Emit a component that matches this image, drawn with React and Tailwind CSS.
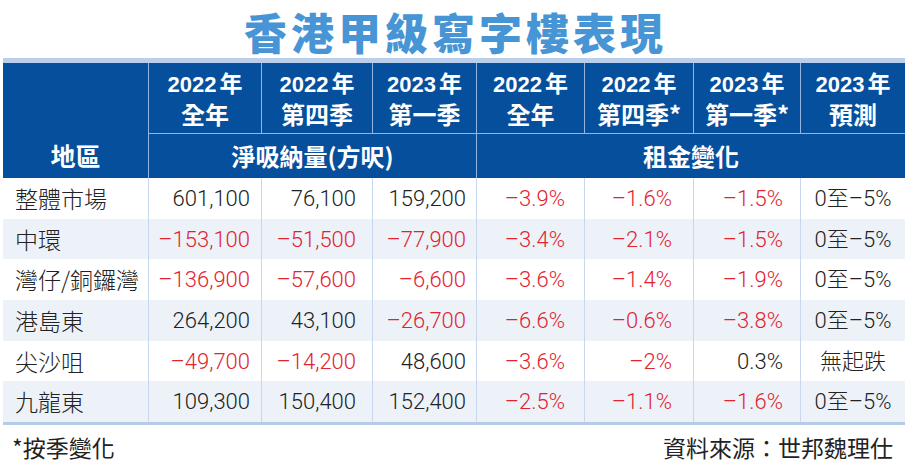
import React from "react";

const headers = [
  ["2022", "全年"],
  ["2022", "第四季"],
  ["2023", "第一季"],
  ["2022", "全年"],
  ["2022", "第四季*"],
  ["2023", "第一季*"],
  ["2023", "預測"],
];

const rows = [
  ["整體市場", [["601,100", 0], ["76,100", 0], ["159,200", 0], ["–3.9%", 1], ["–1.6%", 1], ["–1.5%", 1]], "0至–5%"],
  ["中環", [["–153,100", 1], ["–51,500", 1], ["–77,900", 1], ["–3.4%", 1], ["–2.1%", 1], ["–1.5%", 1]], "0至–5%"],
  ["灣仔/銅鑼灣", [["–136,900", 1], ["–57,600", 1], ["–6,600", 1], ["–3.6%", 1], ["–1.4%", 1], ["–1.9%", 1]], "0至–5%"],
  ["港島東", [["264,200", 0], ["43,100", 0], ["–26,700", 1], ["–6.6%", 1], ["–0.6%", 1], ["–3.8%", 1]], "0至–5%"],
  ["尖沙咀", [["–49,700", 1], ["–14,200", 1], ["48,600", 0], ["–3.6%", 1], ["–2%", 1], ["0.3%", 0]], "無起跌"],
  ["九龍東", [["109,300", 0], ["150,400", 0], ["152,400", 0], ["–2.5%", 1], ["–1.1%", 1], ["–1.6%", 1]], "0至–5%"],
];

const padR = ["pr-[11px]", "pr-[16px]", "pr-[10px]", "pr-[19px]", "pr-[21px]", "pr-[17px]"];
const rowH = ["h-[41px]", "h-[40px]", "h-[41px]", "h-[41px]", "h-[40px]", "h-[41px]"];
const cols = "grid grid-cols-[145px_113px_111px_104px_108px_109px_107px_105px]";
const cjk = "font-['Noto_Sans_CJK_TC','Noto_Sans_CJK_SC',sans-serif]";
const num = "font-['Roboto','Noto_Sans_CJK_TC',sans-serif]";
const head = "font-['Liberation_Sans','Noto_Sans_CJK_TC',sans-serif]";

export default function App() {
  return (
    <div className={`w-[907px] h-[467px] bg-white overflow-hidden ${cjk}`}>
      <div className="h-[63px] -mb-[5px] flex items-start justify-center text-[43px] font-black text-[#4895d5] tracking-[4px] leading-[63px] pl-[4px]">
        香港甲級寫字樓表現
      </div>
      <div className="ml-[3px] w-[902px]">
        <div className="h-[5px] bg-[#b9cfeb]" />
        <div className={`${cols} grid-rows-[70px_45px] bg-[#064f9c] text-white font-bold ${head}`}>
          <div className={`row-span-2 flex items-center justify-center pt-[70px] text-[25px] ${cjk}`}>
            地區
          </div>
          {headers.map(([y, s], i) => (
            <div
              key={i}
              className="border-l border-[#93b4df] flex flex-col items-center justify-center leading-[29px] text-[22px]"
            >
              <div>
                {y}
                <span className={`ml-[3px] text-[23px] ${cjk}`}>年</span>
              </div>
              <div className={`text-[24px] ${cjk}`}>{s}</div>
            </div>
          ))}
          <div className={`col-span-3 border-l border-t border-[#93b4df] flex items-center justify-center text-[24px] ${cjk}`}>
            淨吸納量(方呎)
          </div>
          <div className={`col-span-4 border-l border-t border-[#93b4df] flex items-center justify-center text-[24px] ${cjk}`}>
            租金變化
          </div>
        </div>
        <div className="border-b-[3px] border-[#b5cbe8]">
          {rows.map(([name, vals, last], r) => (
            <div key={r} className={`${cols} ${rowH[r]} ${r % 2 === 1 ? "bg-[#edf2f9]" : "bg-white"}`}>
              <div className="flex items-center pl-[12px] text-[23px] text-[#222] font-light">
                {name}
              </div>
              {vals.map(([v, red], c) => (
                <div
                  key={c}
                  className={`border-l border-[#c6d7ee] flex items-center justify-end ${padR[c]} text-[22px] font-light ${num} ${red ? "text-[#e2232f]" : "text-[#222]"}`}
                >
                  {v}
                </div>
              ))}
              <div className={`border-l border-[#c6d7ee] flex items-center justify-center text-[22px] font-light text-[#222] ${num}`}>
                {last}
              </div>
            </div>
          ))}
        </div>
      </div>
      <div className="flex justify-between items-center px-[12px] mt-[5px] text-[23px] text-[#222]">
        <div>*按季變化</div>
        <div className="mr-[2px]">資料來源：世邦魏理仕</div>
      </div>
    </div>
  );
}
